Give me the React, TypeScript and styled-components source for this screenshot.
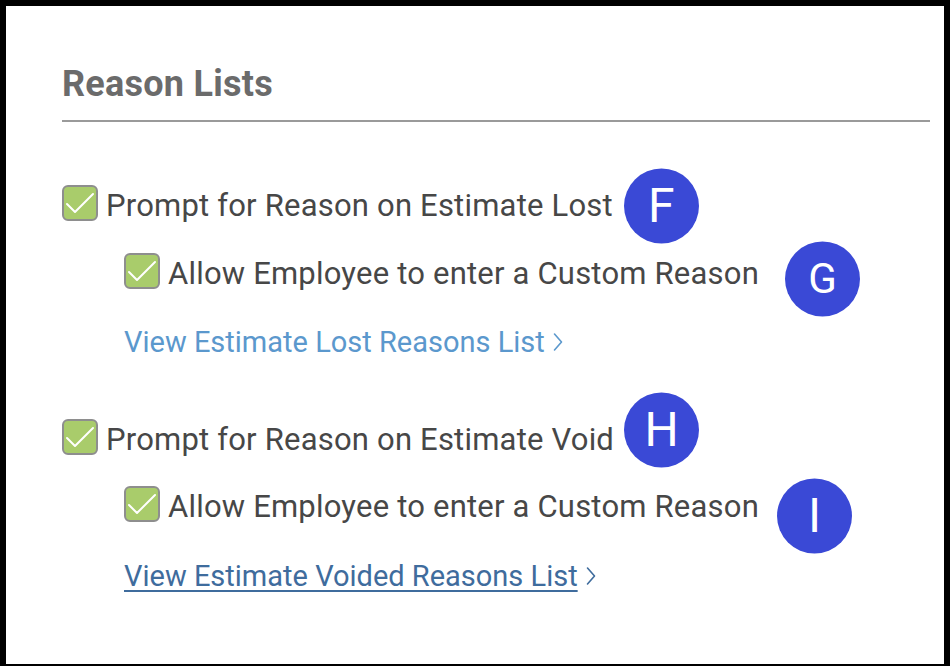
import React from "react";
import styled, { createGlobalStyle } from "styled-components";

const GlobalStyle = createGlobalStyle`
  html, body {
    margin: 0;
    padding: 0;
    background: #fff;
  }
  body {
    font-family: Roboto, "Liberation Sans", sans-serif;
  }
`;

const Frame = styled.div`
  box-sizing: border-box;
  width: 950px;
  height: 666px;
  border: 6px solid #000;
  border-bottom-width: 2px;
  background: #fff;
  padding: 58px 14px 0 56px;
  overflow: hidden;
`;

const Heading = styled.h2`
  margin: 0;
  font-size: 36px;
  line-height: 40px;
  font-weight: 700;
  letter-spacing: 0.25px;
  color: #6b6b6b;
`;

const Divider = styled.hr`
  margin: 16px 0 0;
  border: 0;
  height: 2px;
  background: #9a9a9a;
`;

const Group = styled.div<{ $top: number }>`
  display: flex;
  flex-direction: column;
  align-items: flex-start;
  margin-top: ${({ $top }) => $top}px;
`;

const Row = styled.div<{ $indent?: boolean; $gap: number }>`
  position: relative;
  display: inline-flex;
  align-items: flex-start;
  gap: 8px;
  margin-left: ${({ $indent }) => ($indent ? 62 : 0)}px;
  margin-top: ${({ $gap }) => $gap}px;
`;

const Box = styled.span`
  box-sizing: border-box;
  width: 36px;
  height: 36px;
  flex: none;
  border: 2px solid #8e8e8e;
  border-radius: 6px;
  background: #a9cc6b;
  display: flex;
  align-items: center;
  justify-content: center;

  svg {
    display: block;
  }
`;

const Label = styled.span`
  margin-top: 3px;
  font-size: 31px;
  line-height: 36px;
  letter-spacing: 0.2px;
  color: #474747;
  white-space: nowrap;
`;

const Badge = styled.span<{ $gap: number; $dy: number; $size: number }>`
  position: absolute;
  left: calc(100% + ${({ $gap }) => $gap}px);
  top: calc(50% + ${({ $dy }) => $dy}px);
  transform: translateY(-50%);
  width: 75px;
  height: 75px;
  border-radius: 50%;
  background: #3a49d6;
  color: #fff;
  display: flex;
  align-items: center;
  justify-content: center;
  font-size: ${({ $size }) => $size}px;
  font-weight: 400;
  line-height: 1;
`;

const LinkRow = styled.a<{ $dark?: boolean; $gap: number }>`
  display: inline-flex;
  align-items: center;
  gap: 8px;
  margin-left: 62px;
  margin-top: ${({ $gap }) => $gap}px;
  font-size: 29px;
  line-height: 34px;
  color: ${({ $dark }) => ($dark ? "#3f6c9d" : "#5b98cd")};
  text-decoration: none;
  cursor: pointer;
  white-space: nowrap;
`;

const LinkText = styled.span<{ $underline?: boolean }>`
  text-decoration: ${({ $underline }) => ($underline ? "underline" : "none")};
  text-decoration-thickness: 2px;
  text-underline-offset: 4px;
`;

const Check = () => (
  <svg width="32" height="32" viewBox="0 0 32 32">
    <polyline
      points="3,17 11,25 29,7"
      fill="none"
      stroke="#fff"
      strokeWidth="2"
      strokeLinecap="round"
      strokeLinejoin="round"
    />
  </svg>
);

const Chevron = () => (
  <svg width="10" height="20" viewBox="0 0 10 20">
    <polyline
      points="1.5,2 8.5,10 1.5,18"
      fill="none"
      stroke="currentColor"
      strokeWidth="1.6"
      strokeLinecap="round"
      strokeLinejoin="round"
    />
  </svg>
);

interface OptionProps {
  label: string;
  indent?: boolean;
  gap: number;
  badge: { letter: string; gap: number; dy: number; size: number };
}

const Option = ({ label, indent, gap, badge }: OptionProps) => (
  <Row $indent={indent} $gap={gap}>
    <Box>
      <Check />
    </Box>
    <Label>{label}</Label>
    <Badge $gap={badge.gap} $dy={badge.dy} $size={badge.size}>
      {badge.letter}
    </Badge>
  </Row>
);

export default function App() {
  return (
    <>
      <GlobalStyle />
      <Frame>
        <Heading>Reason Lists</Heading>
        <Divider />

        <Group $top={63}>
          <Option
            label="Prompt for Reason on Estimate Lost"
            gap={0}
            badge={{ letter: "F", gap: 11, dy: 1, size: 48 }}
          />
          <Option
            indent
            label="Allow Employee to enter a Custom Reason"
            gap={29}
            badge={{ letter: "G", gap: 26, dy: 6, size: 42 }}
          />
          <LinkRow $gap={33}>
            <LinkText>View Estimate Lost Reasons List</LinkText>
            <Chevron />
          </LinkRow>
        </Group>

        <Group $top={60}>
          <Option
            label="Prompt for Reason on Estimate Void"
            gap={0}
            badge={{ letter: "H", gap: 10, dy: -9, size: 48 }}
          />
          <Option
            indent
            label="Allow Employee to enter a Custom Reason"
            gap={28}
            badge={{ letter: "I", gap: 18, dy: 10, size: 48 }}
          />
          <LinkRow $dark $gap={34}>
            <LinkText $underline>View Estimate Voided Reasons List</LinkText>
            <Chevron />
          </LinkRow>
        </Group>
      </Frame>
    </>
  );
}
